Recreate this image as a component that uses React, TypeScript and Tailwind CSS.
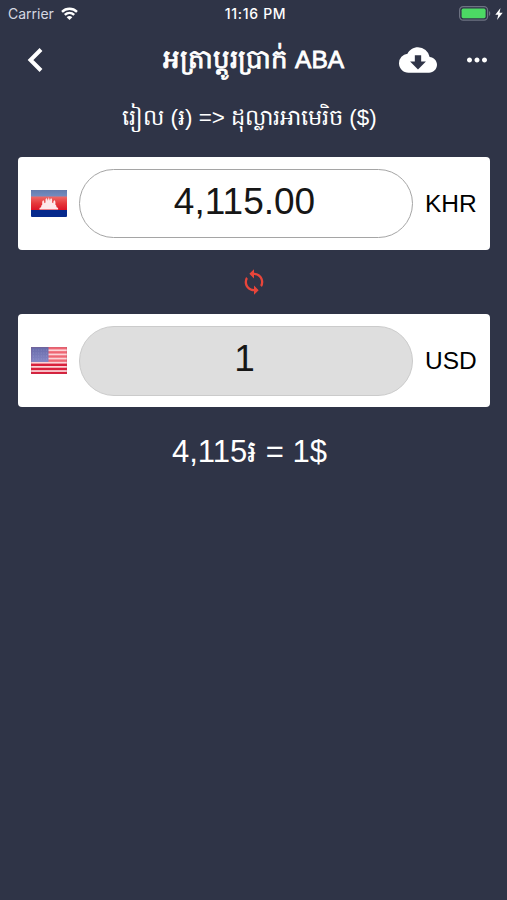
import React, { useState } from "react";
import { MdCloudDownload, MdLoop, MdMoreHoriz } from "react-icons/md";

const RATE = 4115;

const CambodiaFlag = () => (
  <svg width="36" height="27" viewBox="0 0 36 27" className="shrink-0">
    <defs>
      <linearGradient id="khBlue" x1="0" y1="0" x2="0" y2="1">
        <stop offset="0" stopColor="#657cae" />
        <stop offset="1" stopColor="#7790c5" />
      </linearGradient>
      <linearGradient id="khRed" x1="0" y1="0" x2="0" y2="1">
        <stop offset="0" stopColor="#ef6a68" />
        <stop offset="0.5" stopColor="#e5393b" />
        <stop offset="1" stopColor="#dc1427" />
      </linearGradient>
    </defs>
    <rect width="36" height="27" rx="1" fill="#06298c" />
    <rect width="36" height="8" rx="1" fill="url(#khBlue)" />
    <rect y="6.5" width="36" height="13.5" fill="url(#khRed)" />
    <path
      d="M8.5 19.5V18l1.5-.7.5-2 .7-.5v-3l1-1.8 1.1 1.8v1.4l1.2-.6V9.5l1-1.5 1 1.5v1.6l1.3-3.8 1.3 3.8V9.5l1-1.5 1 1.5v3.1l1.2.6v-1.4l1.1-1.8 1 1.8v3l.7.5.5 2 1.5.7v1.5z"
      fill="#fde8ea"
    />
  </svg>
);

const UsaFlag = () => (
  <svg width="36" height="27" viewBox="0 0 36 27" className="shrink-0">
    <defs>
      <linearGradient id="usBlue" x1="0" y1="0" x2="0" y2="1">
        <stop offset="0" stopColor="#6669a8" />
        <stop offset="1" stopColor="#8587c5" />
      </linearGradient>
    </defs>
    <rect width="36" height="27" rx="1" fill="#fbd3d7" />
    {[0, 1, 2, 3, 4, 5, 6].map((i) => (
      <rect
        key={i}
        y={i * 4.15}
        width="36"
        height="2.4"
        fill={i < 4 ? "#ee6673" : "#d9203c"}
      />
    ))}
    <rect width="17.5" height="15" fill="url(#usBlue)" />
    {[3, 6, 9, 12].map((y) => (
      <path
        key={y}
        d={`M2 ${y}H16`}
        stroke="#b9bbdf"
        strokeWidth="0.8"
        strokeDasharray="1 1.6"
        opacity="0.4"
      />
    ))}
    <rect width="36" height="27" rx="1" fill="none" stroke="#9b4a60" strokeOpacity="0.35" />
  </svg>
);

const StatusBar = () => (
  <div className="grid h-7 grid-cols-3 items-center pl-2 pr-1 font-['Inter',sans-serif]">
    <div className="flex items-center gap-[7px] pb-px text-[#d5d8e2]">
      <span className="text-[14px]">Carrier</span>
      <svg width="17" height="13" viewBox="0 0 17 13" fill="none" stroke="#fff" strokeWidth="2.4">
        <path d="M1 4.8C5.2 .7 11.8 .7 16 4.8" />
        <path d="M3.8 7.9c2.7-2.6 6.7-2.6 9.4 0" />
        <path d="M5.7 10.2c1.6-1.5 4-1.5 5.6 0L8.5 13z" fill="#fff" stroke="none" />
      </svg>
    </div>
    <span className="whitespace-nowrap pb-px text-center text-[14px] font-medium tracking-[0.7px]">
      11:16 PM
    </span>
    <div className="flex items-center justify-end gap-1 pb-px">
      <svg width="32" height="15" viewBox="0 0 32 15">
        <rect x="0.6" y="0.6" width="28" height="13.6" rx="3.6" fill="none" stroke="#6d7282" strokeWidth="1.2" />
        <rect x="2.6" y="2.6" width="24" height="9.6" rx="1.6" fill="#4cd964" />
        <path d="M30 5v5c1.7-.8 1.7-4.2 0-5z" fill="#6d7282" />
      </svg>
      <svg width="8" height="12" viewBox="0 0 8 12" fill="#fff">
        <path d="M5.5 0 0.3 6.8h3L2 12l5.7-7.2H4.5z" />
      </svg>
    </div>
  </div>
);

const Header = () => (
  <header className="grid h-16 grid-cols-[100px_1fr_100px] items-center">
    <button className="ml-[27px] w-4">
      <svg width="16" height="26" viewBox="0 0 16 26" fill="none" stroke="#fff" strokeWidth="4">
        <path d="M14 2.5 3.5 13 14 23.5" />
      </svg>
    </button>
    <h1 className="-mt-0.5 whitespace-nowrap text-center text-[26px] font-normal leading-10 [-webkit-text-stroke:0.8px_white]">
      អត្រាប្តូរប្រាក់ <span className="text-[24.5px]">ABA</span>
    </h1>
    <div className="-ml-2 flex items-center gap-[25px]">
      <MdCloudDownload size={38} />
      <MdMoreHoriz size={30} />
    </div>
  </header>
);

type RowProps = {
  flag: React.ReactNode;
  code: string;
  value: string;
  readOnly?: boolean;
  onChange?: (value: string) => void;
};

const CurrencyRow = ({ flag, code, value, readOnly, onChange }: RowProps) => (
  <div className="ml-[18px] mr-[17px] flex h-[93px] items-center rounded bg-white pl-[13px] text-black">
    {flag}
    <input
      value={value}
      readOnly={readOnly}
      onChange={(e) => onChange?.(e.target.value)}
      className={
        readOnly
          ? "ml-3 h-[70px] w-[334px] rounded-full border border-[#cbcbcb] bg-[#dedede] pb-1 pr-[3px] text-center text-[37px] text-[#161616] outline-none"
          : "ml-3 h-[69px] w-[334px] rounded-full border border-[#a5a5a5] bg-white pb-1 pr-[3px] text-center text-[37px] text-[#161616] outline-none"
      }
    />
    <span className="ml-3 pt-0.5 text-[24.5px]">{code}</span>
  </div>
);

const App = () => {
  const [amount, setAmount] = useState("4,115.00");
  const usd = Number(amount.replace(/,/g, "")) / RATE;

  return (
    <div className="flex h-[900px] w-[507px] flex-col bg-[#2f3447] font-['Liberation_Sans',sans-serif] text-white">
      <StatusBar />
      <Header />
      <p className="h-[65px] whitespace-nowrap pr-2 pt-2 text-center text-[22.4px] leading-9">
        រៀល (៛) =&gt; ដុល្លារអាមេរិច ($)
      </p>
      <CurrencyRow flag={<CambodiaFlag />} code="KHR" value={amount} onChange={setAmount} />
      <button className="flex h-16 items-center justify-center text-[#e8453a]">
        <MdLoop size={28} />
      </button>
      <CurrencyRow flag={<UsaFlag />} code="USD" value={String(usd)} readOnly />
      <p className="mt-[26px] pr-2 text-center text-[31px] leading-[38px]">
        {RATE.toLocaleString("en-US")}៛ = 1$
      </p>
    </div>
  );
};

export default App;
